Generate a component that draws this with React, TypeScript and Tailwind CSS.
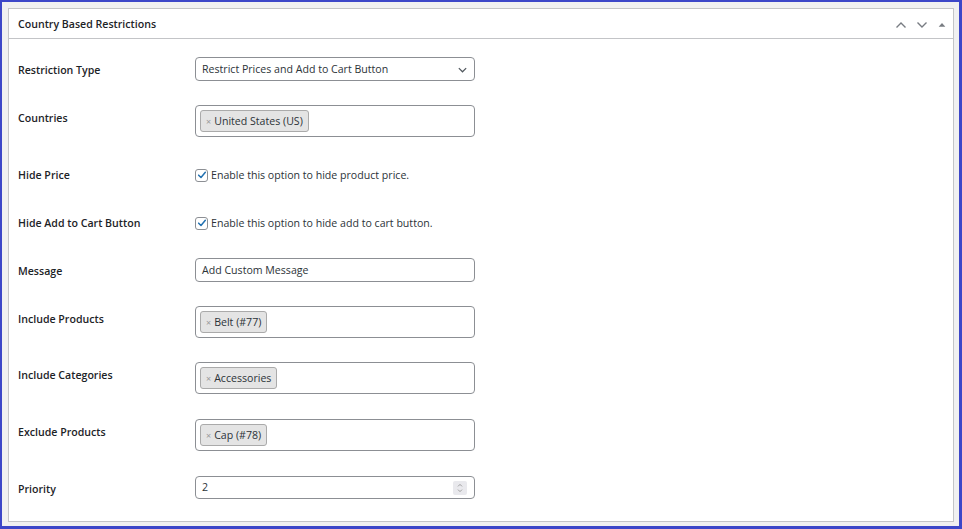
import React from 'react';

const font = { fontFamily: '"Open Sans", "Noto Sans", sans-serif' };

const Tag: React.FC<{ label: string }> = ({ label }) => (
  <span className="inline-flex items-center h-[22px] pt-[1px] px-[5px] gap-[3px] rounded-[3px] border border-[#aaaaaa] bg-[#e4e4e4] text-[10.6px] text-[#2c3338]">
    <span className="text-[9px] text-[#999] leading-none">×</span>
    {label}
  </span>
);

const Check: React.FC = () => (
  <span className="inline-flex items-center justify-center w-[13px] h-[13px] rounded-[3px] border border-[#8c8f94] bg-white">
    <svg viewBox="0 0 12 12" className="w-[10px] h-[10px]">
      <path d="M2 6.2 L4.8 9 L10 2.8" fill="none" stroke="#2271b1" strokeWidth="1.8" strokeLinecap="round" strokeLinejoin="round" />
    </svg>
  </span>
);

const Row: React.FC<{ label: string; className?: string; children: React.ReactNode }> = ({ label, className = '', children }) => (
  <div className={`flex items-start ${className}`}>
    <div className="w-[177px] shrink-0 pt-[5px] text-[10.6px] leading-[16px] font-semibold text-[#1d2327]">{label}</div>
    <div className="w-[280px]">{children}</div>
  </div>
);

const MultiBox: React.FC<{ tag: string }> = ({ tag }) => (
  <div className="h-[32px] rounded-[4px] border border-[#8c8f94] bg-white flex items-center px-[4px]">
    <Tag label={tag} />
  </div>
);

export default function App() {
  return (
    <div style={font} className="w-[962px] h-[529px] bg-[#f0f0f1] border-[#3c46c8] border-l-2 border-t-2 border-r-[3px] border-b-[3px] pl-[6px] pt-[6px] pr-[5px] pb-[4px] flex">
      <div className="flex-1 bg-white border border-[#c3c4c7] flex flex-col">
        <div className="h-[30px] shrink-0 border-b border-[#c3c4c7] flex items-center pt-[2px] pl-[9px] pr-[6px]">
          <h2 className="text-[10.6px] font-semibold text-[#1d2327]">Country Based Restrictions</h2>
          <div className="ml-auto flex items-center gap-[9px] text-[#787c82]">
            <svg viewBox="0 0 12 12" className="w-[12px] h-[12px]">
              <path d="M1.5 8.5 L6 4 L10.5 8.5" fill="none" stroke="currentColor" strokeWidth="1.4" />
            </svg>
            <svg viewBox="0 0 12 12" className="w-[12px] h-[12px]">
              <path d="M1.5 3.5 L6 8 L10.5 3.5" fill="none" stroke="currentColor" strokeWidth="1.4" />
            </svg>
            <svg viewBox="0 0 12 12" className="w-[10px] h-[10px]">
              <path d="M2 8 L6 3.5 L10 8 Z" fill="currentColor" />
            </svg>
          </div>
        </div>

        <div className="flex flex-col gap-6 pt-[18px] pl-[9px]">
          <Row label="Restriction Type">
            <div className="h-[24px] rounded-[4px] border border-[#8c8f94] bg-white flex items-center pt-[1px] pl-[6px] pr-[6px] text-[10.6px] text-[#2c3338]">
              Restrict Prices and Add to Cart Button
              <svg viewBox="0 0 12 12" className="ml-auto w-[11px] h-[11px]">
                <path d="M2 4.5 L6 8.5 L10 4.5" fill="none" stroke="#50575e" strokeWidth="1.3" />
              </svg>
            </div>
          </Row>
          <Row label="Countries">
            <MultiBox tag="United States (US)" />
          </Row>
          <Row label="Hide Price" className="mt-[1px]">
            <label className="flex items-center gap-[3px] pt-[5px] text-[10.6px] leading-[16px] text-[#2c3338]">
              <Check />
              Enable this option to hide product price.
            </label>
          </Row>
          <Row label="Hide Add to Cart Button" className="mt-[3px]">
            <label className="flex items-center gap-[3px] pt-[5px] text-[10.6px] leading-[16px] text-[#2c3338]">
              <Check />
              Enable this option to hide add to cart button.
            </label>
          </Row>
          <Row label="Message" className="mt-[3px]">
            <div className="h-[24px] rounded-[4px] border border-[#8c8f94] bg-white flex items-center pt-[1px] pl-[6px] text-[10.6px] text-[#2c3338]">
              Add Custom Message
            </div>
          </Row>
          <Row label="Include Products">
            <MultiBox tag="Belt (#77)" />
          </Row>
          <Row label="Include Categories">
            <MultiBox tag="Accessories" />
          </Row>
          <Row label="Exclude Products" className="mt-[1px]">
            <MultiBox tag="Cap (#78)" />
          </Row>
          <Row label="Priority" className="mt-[1px]">
            <div className="h-[23px] rounded-[4px] border border-[#8c8f94] bg-white flex items-center pt-[1px] pl-[6px] pr-[7px] text-[10.6px] text-[#2c3338]">
              2
              <span className="ml-auto w-[14px] h-[14px] bg-[#e9e9ed] flex items-center justify-center rounded-[2px]">
                <svg viewBox="0 0 10 14" className="w-[8px] h-[12px]">
                  <path d="M2.5 5 L5 2.5 L7.5 5 M2.5 9 L5 11.5 L7.5 9" fill="none" stroke="#8a8a8a" strokeWidth="1" />
                </svg>
              </span>
            </div>
          </Row>
        </div>
      </div>
    </div>
  );
}
